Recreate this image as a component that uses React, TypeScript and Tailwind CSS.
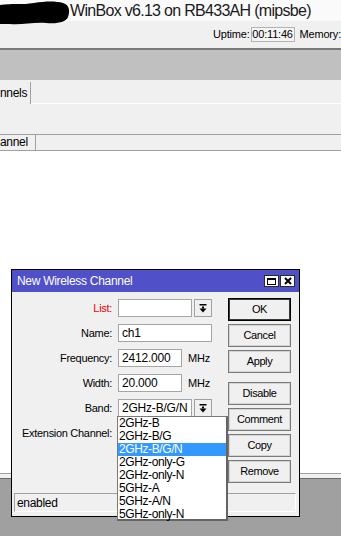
import React from "react";

const DropBtn = () => (
  <div className="w-[18px] h-[18px] ml-[2px] border border-[#a0a0a0] bg-[#f0f0f0] flex items-center justify-center">
    <svg width="8" height="9" viewBox="0 0 8 9">
      <rect x="0.5" y="0" width="7" height="1.5" fill="#000" />
      <rect x="3" y="2.5" width="2" height="2" fill="#000" />
      <polygon points="0.5,4.5 7.5,4.5 4,8.5" fill="#000" />
    </svg>
  </div>
);

const Input = ({ w, value = "" }: { w: string; value?: string }) => (
  <div className={`${w} h-[18px] border border-[#a5a5a5] bg-white pl-[3px] leading-[16px] text-[12px] tracking-[-0.2px]`}>
    {value}
  </div>
);

const Row = ({ label, red, children }: { label: string; red?: boolean; children?: React.ReactNode }) => (
  <div className="h-[18px] flex items-center">
    <div className={`w-[100px] text-right text-[11px] tracking-[-0.3px] ${red ? "text-[#f00000]" : "text-black"}`}>{label}</div>
    <div className="ml-[6px] flex items-center">{children}</div>
  </div>
);

const Btn = ({ label, def }: { label: string; def?: boolean }) => (
  <div
    className={`h-[23px] w-[63px] flex items-center justify-center text-[11px] tracking-[-0.4px] bg-[#f0f0f0] ${
      def ? "border border-black shadow-[inset_0_0_0_1px_#3a3a3a]" : "border border-[#7a7a7a] shadow-[inset_0_0_0_1px_#d4d4d4]"
    }`}
  >
    {label}
  </div>
);

const items = ["2GHz-B", "2GHz-B/G", "2GHz-B/G/N", "2GHz-only-G", "2GHz-only-N", "5GHz-A", "5GHz-A/N", "5GHz-only-N"];

export default function App() {
  return (
    <div className="relative w-[341px] h-[536px] overflow-hidden bg-white font-['Liberation_Sans',Arial,sans-serif] text-black flex flex-col">
      {/* title */}
      <div className="relative h-[21px] bg-[#fafafa] shrink-0">
        <svg className="absolute left-0 top-0" width="72" height="26" viewBox="0 0 72 26">
          <path d="M0,5 C12,3 22,5 34,3 C46,1 56,1 63,3 C70,5 70,12 68,17 C66,22 58,24 46,23 C34,22 22,25 10,24 L0,24 Z" fill="#000" />
        </svg>
        <div className="pl-[70px] pt-[3px] text-[16px] leading-[16px] tracking-[-0.7px] text-[#1a1a1a] whitespace-nowrap">
          WinBox v6.13 on RB433AH (mipsbe)
        </div>
      </div>
      {/* toolbar */}
      <div className="h-[29px] shrink-0 bg-[#f0f0f0] border-b-2 border-[#7a7a7a] flex items-center pl-[213px] text-[11px] whitespace-nowrap">
        <span className="tracking-[-0.2px]">Uptime:</span>
        <div className="ml-[1px] w-[46px] h-[15px] border border-[#b4b4b4] bg-[#f4f4f4] flex items-center justify-center tracking-[-0.2px]">00:11:46</div>
        <span className="ml-[5px] tracking-[-0.2px]">Memory:</span>
      </div>
      {/* gray band */}
      <div className="h-[30px] shrink-0 bg-[#c0c0c0]" />
      {/* tab bar */}
      <div className="h-[24px] shrink-0 bg-[#f0f0f0] flex items-end">
        <div className="w-[31px] h-[22px] border-r border-[#a0a0a0] flex items-center text-[12px] tracking-[-0.3px]">nnels</div>
        <div className="flex-1 h-[1px] bg-white" />
      </div>
      <div className="h-[30px] shrink-0 bg-[#f0f0f0]" />
      {/* header */}
      <div className="h-[17px] shrink-0 bg-[#f0f0f0] border-t border-b border-[#a0a0a0] flex">
        <div className="w-[36px] border-r border-[#a0a0a0] text-[12px] leading-[15px] tracking-[-0.3px]">annel</div>
      </div>
      {/* list */}
      <div className="h-[322px] shrink-0 bg-white" />
      <div className="h-[5px] shrink-0 bg-[#f0f0f0] border-t border-[#a0a0a0]" />
      <div className="flex-1 bg-[#a0a0a0] border-t border-[#6a6a6a]" />

      {/* dialog */}
      <div className="absolute left-[11px] top-[269px] w-[289px] h-[248px] border border-black bg-[#f0f0f0] flex flex-col">
        <div className="h-[22px] shrink-0 bg-[#5050c9] flex items-center pl-[5px] pr-[4px]">
          <span className="text-white text-[12px] tracking-[-0.3px]">New Wireless Channel</span>
          <div className="ml-auto flex gap-[1px]">
            <div className="w-[15px] h-[12px] bg-white border border-[#2a2a2a] flex items-center justify-center">
              <div className="w-[9px] h-[7px] border border-black border-t-2" />
            </div>
            <div className="w-[15px] h-[12px] bg-white border border-[#2a2a2a] flex items-center justify-center">
              <svg width="8" height="8" viewBox="0 0 8 8">
                <path d="M1,1 L7,7 M7,1 L1,7" stroke="#000" strokeWidth="2" />
              </svg>
            </div>
          </div>
        </div>
        <div className="flex-1 flex pt-[6px]">
          <div className="w-[216px] pt-[1px] flex flex-col gap-[7px]">
            <Row label="List:" red>
              <Input w="w-[74px]" />
              <DropBtn />
            </Row>
            <Row label="Name:">
              <Input w="w-[94px]" value="ch1" />
            </Row>
            <Row label="Frequency:">
              <Input w="w-[64px]" value="2412.000" />
              <span className="ml-[6px] text-[11px] tracking-[-0.2px]">MHz</span>
            </Row>
            <Row label="Width:">
              <Input w="w-[64px]" value="20.000" />
              <span className="ml-[6px] text-[11px] tracking-[-0.2px]">MHz</span>
            </Row>
            <Row label="Band:">
              <Input w="w-[74px]" value="2GHz-B/G/N" />
              <DropBtn />
            </Row>
            <Row label="Extension Channel:" />
          </div>
          <div className="flex flex-col gap-[3px]">
            <Btn label="OK" def />
            <Btn label="Cancel" />
            <Btn label="Apply" />
            <div className="h-[3px]" />
            <Btn label="Disable" />
            <Btn label="Comment" />
            <Btn label="Copy" />
            <Btn label="Remove" />
          </div>
        </div>
        <div className="h-[19px] shrink-0 ml-[2px] mr-[3px] mb-[4px] border border-t-[#a0a0a0] border-l-[#a0a0a0] border-r-white border-b-white flex items-center pl-[2px] text-[12px] tracking-[-0.3px]">
          enabled
        </div>
      </div>

      {/* dropdown list */}
      <div className="absolute left-[117px] top-[416px] w-[111px] h-[105px] bg-white border border-[#7a7a7a] border-r-2 border-b-2 border-r-[#646464] border-b-[#646464] flex flex-col">
        {items.map((it) => (
          <div
            key={it}
            className={`h-[13px] leading-[13px] pl-[1px] text-[12px] tracking-[-0.4px] ${
              it === "2GHz-B/G/N" ? "bg-[#3399ff] text-white" : "text-black"
            }`}
          >
            {it}
          </div>
        ))}
      </div>
    </div>
  );
}
